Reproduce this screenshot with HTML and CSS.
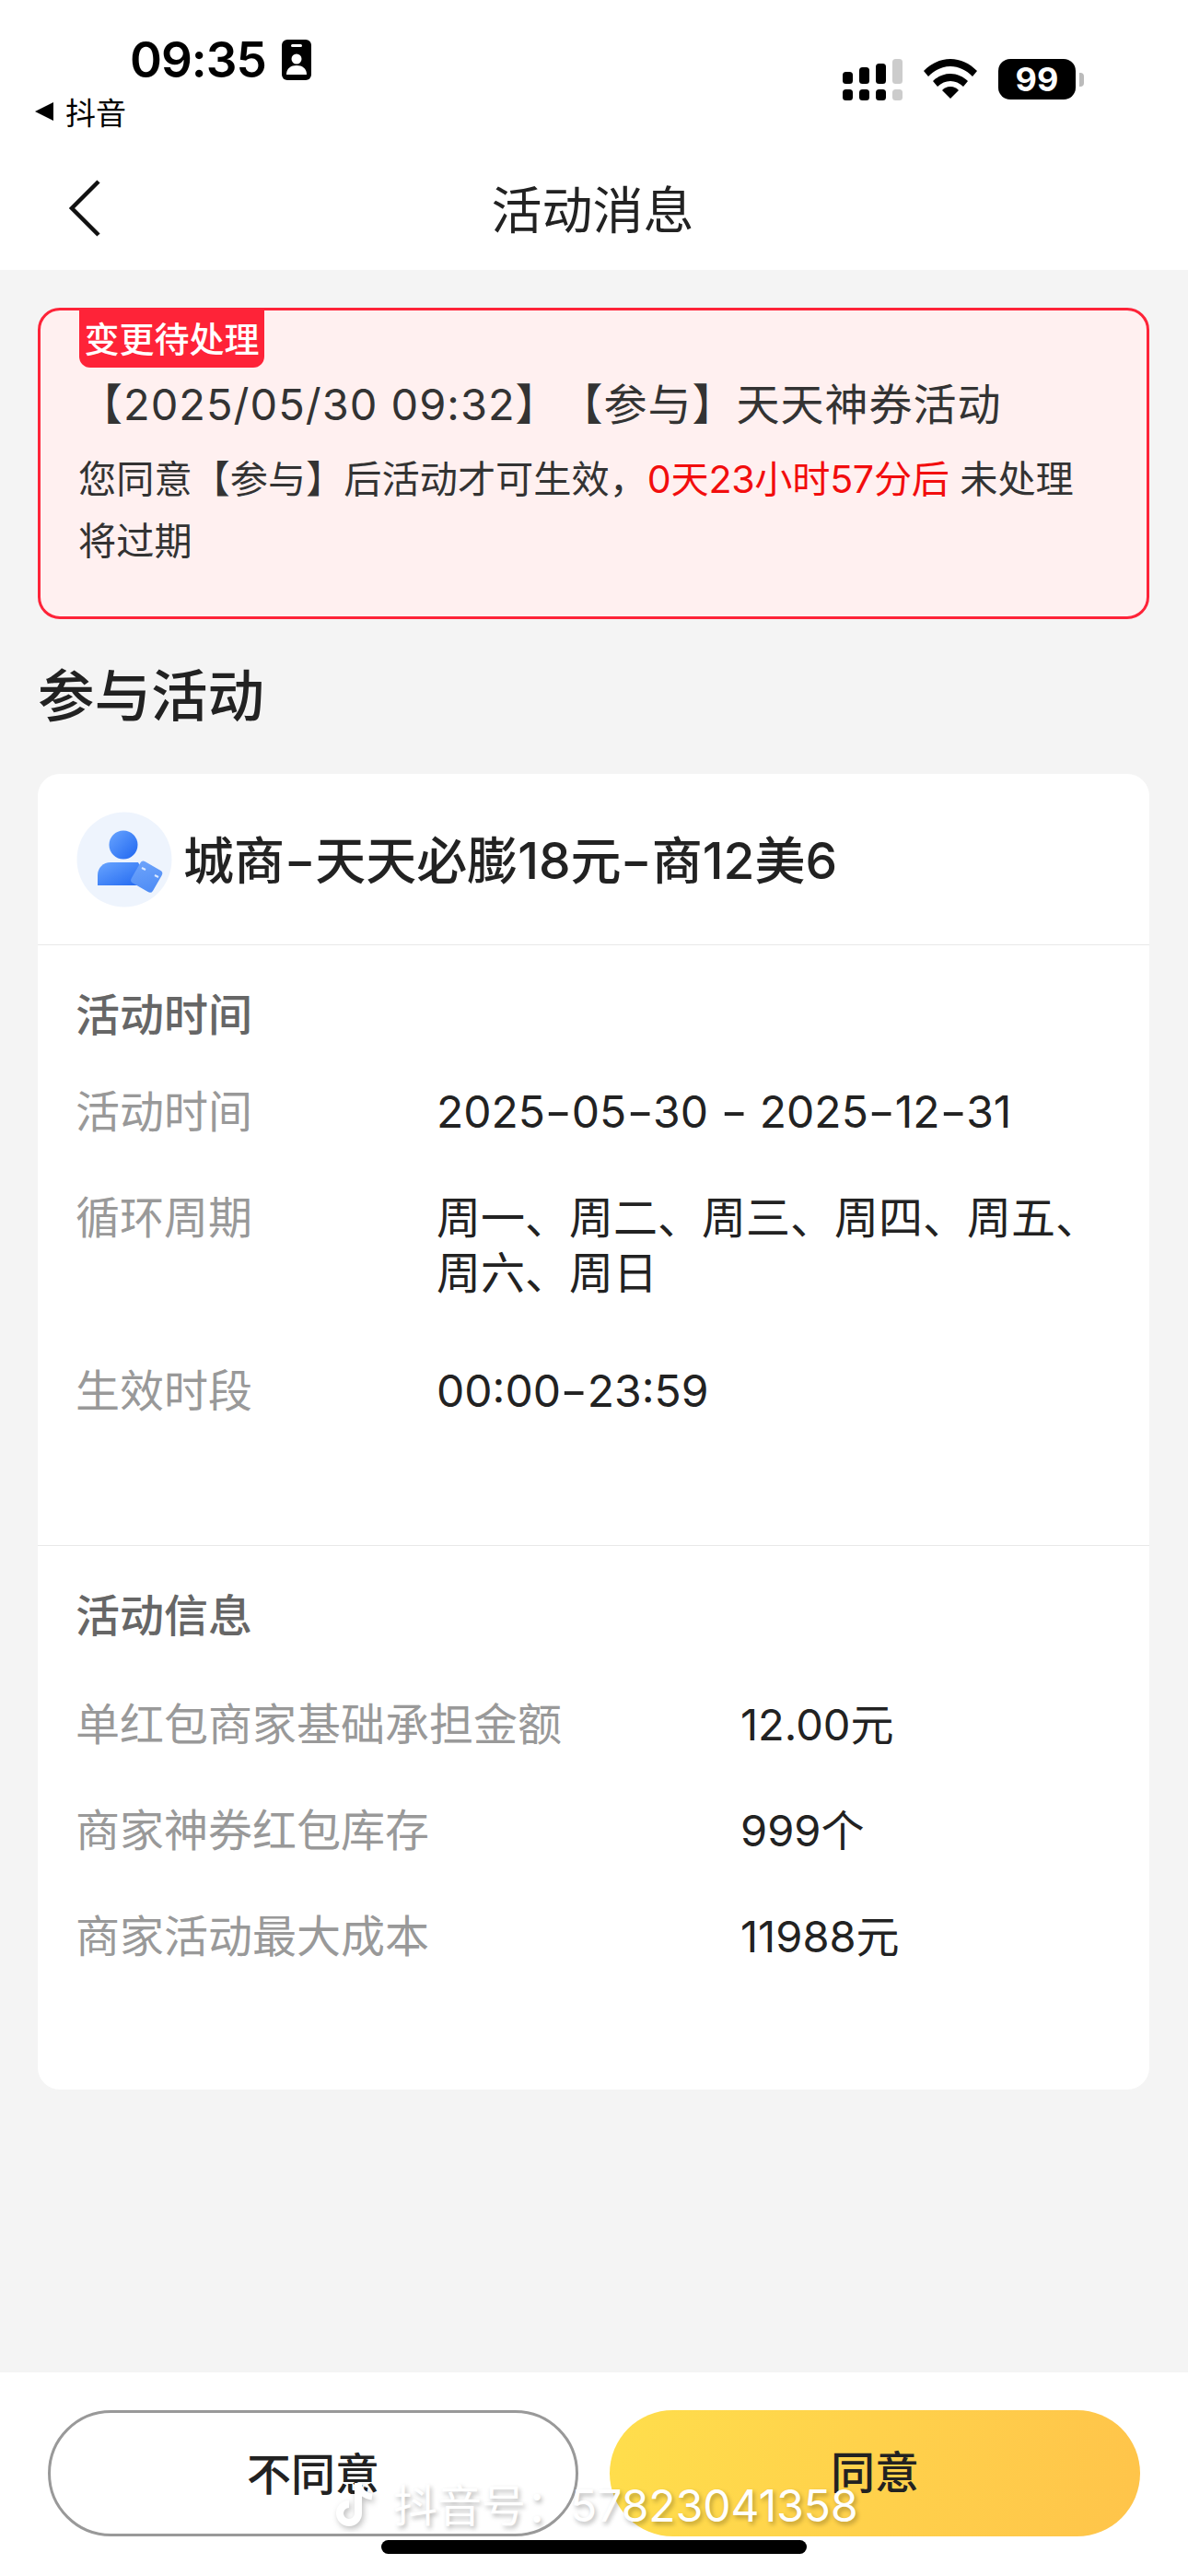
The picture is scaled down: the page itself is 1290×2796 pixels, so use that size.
FILE: index.html
```html
<!DOCTYPE html>
<html lang="zh-CN">

<head>
    <meta charset="utf-8">
    <link rel="stylesheet" href="styles.css">
</head>

<body>
    <div class="page">
        <div class="topBar">
            <div class="statusBar">
                <div class="statusLeft">
                    <div class="timeRow">
                        <span class="time">09:35</span>
                        <svg class="badgeIcon" width="32" height="44" viewBox="0 0 32 44">
                            <rect width="32" height="44" rx="6" fill="#000" />
                            <rect x="10" y="5" width="12" height="3" rx="1.5" fill="#fff" />
                            <circle cx="16" cy="21" r="5.5" fill="#fff" />
                            <path d="M5 38c0-7 5-10 11-10s11 3 11 10z" fill="#fff" />
                        </svg>
                    </div>
                    <div class="backApp">
                        <svg width="22" height="22" viewBox="0 0 22 22">
                            <path d="M1 11 21 1v20z" fill="#000" />
                        </svg>
                        <span>抖音</span>
                    </div>
                </div>
                <div class="statusRight">
                    <svg width="65" height="45" viewBox="0 0 65 45">
                        <rect x="0" y="14" width="11" height="13" rx="3.5" />
                        <rect x="18" y="9" width="11" height="18" rx="3.5" />
                        <rect x="36" y="5" width="11" height="22" rx="3.5" />
                        <rect x="54" y="0" width="11" height="27" rx="3.5" fill="#ccc" />
                        <rect x="0" y="33" width="11" height="12" rx="3.5" />
                        <rect x="18" y="33" width="11" height="12" rx="3.5" />
                        <rect x="36" y="33" width="11" height="12" rx="3.5" />
                        <rect x="54" y="33" width="11" height="12" rx="3.5" fill="#ccc" />
                    </svg>
                    <svg width="58" height="43" viewBox="0 0 58 43">
                        <path d="M0 13C8 5 18 0 29 0s21 5 29 13l-5 6C46 12 38 8 29 8S12 12 5 19z" />
                        <path d="M10 24c5-5 12-8 19-8s14 3 19 8l-5 6c-4-4-9-6-14-6s-10 2-14 6z" />
                        <path d="M20 34c2-2 5-4 9-4s7 2 9 4l-9 9z" />
                    </svg>
                    <div class="battery">
                        <span class="batteryBody">99</span>
                        <span class="batteryNub"></span>
                    </div>
                </div>
            </div>
            <div class="navBar">
                <svg class="backArrow" width="36" height="64" viewBox="0 0 36 64">
                    <path d="M33 3 4 32l29 29" fill="none" stroke="#111" stroke-width="4.5" />
                </svg>
                <div class="navTitle">活动消息</div>
            </div>
        </div>

        <div class="content">
            <div class="alertCard">
                <div class="alertTag">变更待处理</div>
                <div class="alertTitle">【2025/05/30 09:32】【参与】天天神券活动</div>
                <div class="alertText">您同意【参与】后活动才可生效，<span class="redText">0天23小时57分后</span> 未处理将过期</div>
            </div>

            <div class="sectionTitle">参与活动</div>

            <div class="infoCard">
                <div class="cardHead">
                    <svg class="avatar" width="104" height="104" viewBox="0 0 104 104">
                        <defs>
                            <linearGradient id="personFill" x1="0" y1="0" x2="1" y2="1">
                                <stop offset="0" stop-color="#69a5ff" />
                                <stop offset="1" stop-color="#1f66f0" />
                            </linearGradient>
                            <linearGradient id="ticketFill" x1="0" y1="0" x2="1" y2="1">
                                <stop offset="0" stop-color="#6ea4fb" />
                                <stop offset="1" stop-color="#4d8bf5" />
                            </linearGradient>
                        </defs>
                        <circle cx="52" cy="52" r="51.5" fill="#eef4fd" />
                        <circle cx="51" cy="36" r="15.5" fill="url(#personFill)" />
                        <path d="M23 80V69c0-8 6-14 14-14h30l8 14-8 11z" fill="url(#personFill)" />
                        <rect x="63" y="57" width="27" height="27" rx="4" transform="rotate(30 76 70)" fill="url(#ticketFill)" />
                        <path d="M71 61l4 2M85 69l4 2" stroke="#dce9ff" stroke-width="2" />
                    </svg>
                    <div class="cardName">城商<span class="dash">-</span>天天必膨18元<span class="dash">-</span>商12美6</div>
                </div>

                <div class="cardPart timePart">
                    <div class="partTitle">活动时间</div>
                    <div class="timeRows">
                        <div class="infoRow">
                            <div class="rowLabel">活动时间</div>
                            <div class="rowValue">2025<span class="dash">-</span>05<span class="dash">-</span>30 <span class="dash">-</span> 2025<span class="dash">-</span>12<span class="dash">-</span>31</div>
                        </div>
                        <div class="infoRow cycleRow">
                            <div class="rowLabel">循环周期</div>
                            <div class="rowValue">周一、周二、周三、周四、周五、周六、周日</div>
                        </div>
                        <div class="infoRow">
                            <div class="rowLabel">生效时段</div>
                            <div class="rowValue">00:00<span class="dash">-</span>23:59</div>
                        </div>
                    </div>
                </div>

                <div class="cardPart moneyPart">
                    <div class="partTitle">活动信息</div>
                    <div class="moneyRows">
                        <div class="infoRow wideLabel">
                            <div class="rowLabel">单红包商家基础承担金额</div>
                            <div class="rowValue">12.00元</div>
                        </div>
                        <div class="infoRow wideLabel">
                            <div class="rowLabel">商家神券红包库存</div>
                            <div class="rowValue">999个</div>
                        </div>
                        <div class="infoRow wideLabel">
                            <div class="rowLabel">商家活动最大成本</div>
                            <div class="rowValue">11988元</div>
                        </div>
                    </div>
                </div>
            </div>
        </div>

        <div class="bottomBar">
            <button class="btn btnPlain"><span>不同意</span></button>
            <button class="btn btnYellow"><span>同意</span></button>
        </div>

        <div class="watermark">
            <svg width="52" height="56" viewBox="0 0 52 56">
                <path d="M30 3v33a10 10 0 1 1-10-10" fill="none" stroke="#fff" stroke-width="8" />
                <path d="M30 5c2 8 7 12 15 13" fill="none" stroke="#fff" stroke-width="7" />
            </svg>
            <span>抖音号：57823041358</span>
        </div>
        <div class="homeBar"></div>
    </div>
</body>

</html>
```

FILE: styles.css
```css
* {
    box-sizing: border-box;
}

body {
    margin: 0;
    background: #f4f4f4;
    font-family: "Inter", "Noto Sans CJK SC", sans-serif;
    color: #222;
}

.page {
    position: relative;
    width: 1290px;
    height: 2796px;
    display: flex;
    flex-direction: column;
    overflow: hidden;
}

.topBar {
    height: 293px;
    background: #fff;
}

.statusBar {
    height: 165px;
    display: flex;
    justify-content: space-between;
}

.statusLeft {
    padding: 36px 0 0 37px;
}

.timeRow {
    display: flex;
    align-items: center;
    height: 58px;
    padding-left: 104px;
    gap: 17px;
}

.time {
    font-size: 53px;
    font-weight: 600;
    color: #000;
    letter-spacing: -1px;
}

.backApp {
    display: flex;
    align-items: center;
    gap: 12px;
    height: 44px;
    margin-top: 5px;
    font-size: 33px;
    color: #000;
}

.statusRight {
    display: flex;
    align-items: flex-start;
    padding: 64px 113px 0 0;
    gap: 23px;
}

.battery {
    display: flex;
    align-items: center;
    gap: 4px;
}

.batteryBody {
    width: 84px;
    height: 44px;
    border-radius: 13px;
    background: #000;
    color: #fff;
    font-size: 36px;
    font-weight: 700;
    line-height: 44px;
    text-align: center;
}

.batteryNub {
    width: 5px;
    height: 15px;
    border-radius: 0 4px 4px 0;
    background: #bbb;
}

.navBar {
    height: 128px;
    display: flex;
    align-items: center;
    padding: 0 0 6px 74px;
}

.navTitle {
    flex: 1;
    margin-bottom: 4px;
    padding-right: 113px;
    text-align: center;
    font-size: 55px;
    color: #222;
}

.content {
    flex: 1;
    padding: 41px 42px 0 41px;
}

.alertCard {
    height: 338px;
    padding: 0 40px;
    border: 3px solid #fe2338;
    border-radius: 24px;
    background: #fff0f0;
}

.alertTag {
    width: 201px;
    height: 65px;
    margin: -3px 0 0 2px;
    border-radius: 0 0 12px 12px;
    background: #fe2338;
    color: #fff;
    font-size: 38px;
    font-weight: 500;
    line-height: 68px;
    text-align: center;
}

.alertTitle {
    margin-top: 8px;
    padding-left: 2px;
    font-size: 47px;
    letter-spacing: 1px;
    line-height: 64px;
    color: #333;
    white-space: nowrap;
    text-spacing-trim: space-all;
}

.alertText {
    margin-top: 16px;
    padding-left: 1px;
    font-size: 41.2px;
    line-height: 67px;
    color: #333;
    text-spacing-trim: space-all;
}

.redText {
    color: #f20d0d;
    letter-spacing: -.3px;
}

.sectionTitle {
    margin-top: 45px;
    height: 79px;
    font-size: 61.5px;
    font-weight: 500;
    line-height: 77px;
    color: #222;
}

.infoCard {
    margin-top: 44px;
    height: 1428px;
    border-radius: 24px;
    background: #fff;
}

.cardHead {
    height: 186px;
    display: flex;
    align-items: center;
    padding: 0 0 0 42px;
    gap: 12px;
    border-bottom: 1px solid #e8e8e8;
}

.cardName {
    margin-bottom: 6px;
    font-size: 55px;
    font-weight: 500;
    color: #222;
}

.dash {
    display: inline-block;
    margin: 0 .07em;
    transform: scaleX(1.35);
}

.cardPart {
    padding: 0 42px 0 41px;
}

.timePart {
    height: 652px;
    border-bottom: 1px solid #e8e8e8;
    padding-top: 44px;
}

.moneyPart {
    padding-top: 44px;
}

.partTitle {
    font-size: 48px;
    font-weight: 500;
    line-height: 64px;
    color: #666;
}

.timeRows {
    margin-top: 42px;
    display: flex;
    flex-direction: column;
    gap: 55px;
}

.cycleRow {
    margin-bottom: 12px;
}

.moneyRows {
    margin-top: 54px;
    display: flex;
    flex-direction: column;
    gap: 51px;
}

.infoRow {
    display: flex;
    font-size: 48px;
    line-height: 61px;
}

.cycleRow.infoRow {
    line-height: 60px;
}

.moneyRows .infoRow {
    line-height: 64px;
}

.rowLabel {
    width: 392px;
    flex: none;
    color: #999;
}

.wideLabel .rowLabel {
    width: 722px;
}

.rowValue {
    color: #222;
}

.wideLabel .rowValue {
    font-size: 47px;
}

.bottomBar {
    height: 221px;
    display: flex;
    padding: 41px 52px 0;
    gap: 34px;
    background: #fff;
}

.btn {
    width: 576px;
    height: 137px;
    border-radius: 69px;
    font-family: inherit;
    font-size: 48px;
    font-weight: 500;
    color: #222;
}

.btnPlain {
    border: 3px solid #999;
    background: #fff;
    padding-bottom: 6px;
}

.btnYellow {
    border: 0;
    background: linear-gradient(100deg, #ffde4c, #ffc44a);
    padding-bottom: 10px;
}

.watermark {
    position: absolute;
    left: 359px;
    top: 2690px;
    display: flex;
    align-items: center;
    gap: 16px;
    font-size: 48px;
    line-height: 60px;
    color: #fff;
    text-shadow: 2px 3px 5px rgba(0, 0, 0, .28);
    white-space: nowrap;
}

.watermark svg {
    filter: drop-shadow(2px 3px 3px rgba(0, 0, 0, .25));
}

.homeBar {
    position: absolute;
    left: 414px;
    top: 2757px;
    width: 462px;
    height: 15px;
    border-radius: 8px;
    background: #000;
}
```
